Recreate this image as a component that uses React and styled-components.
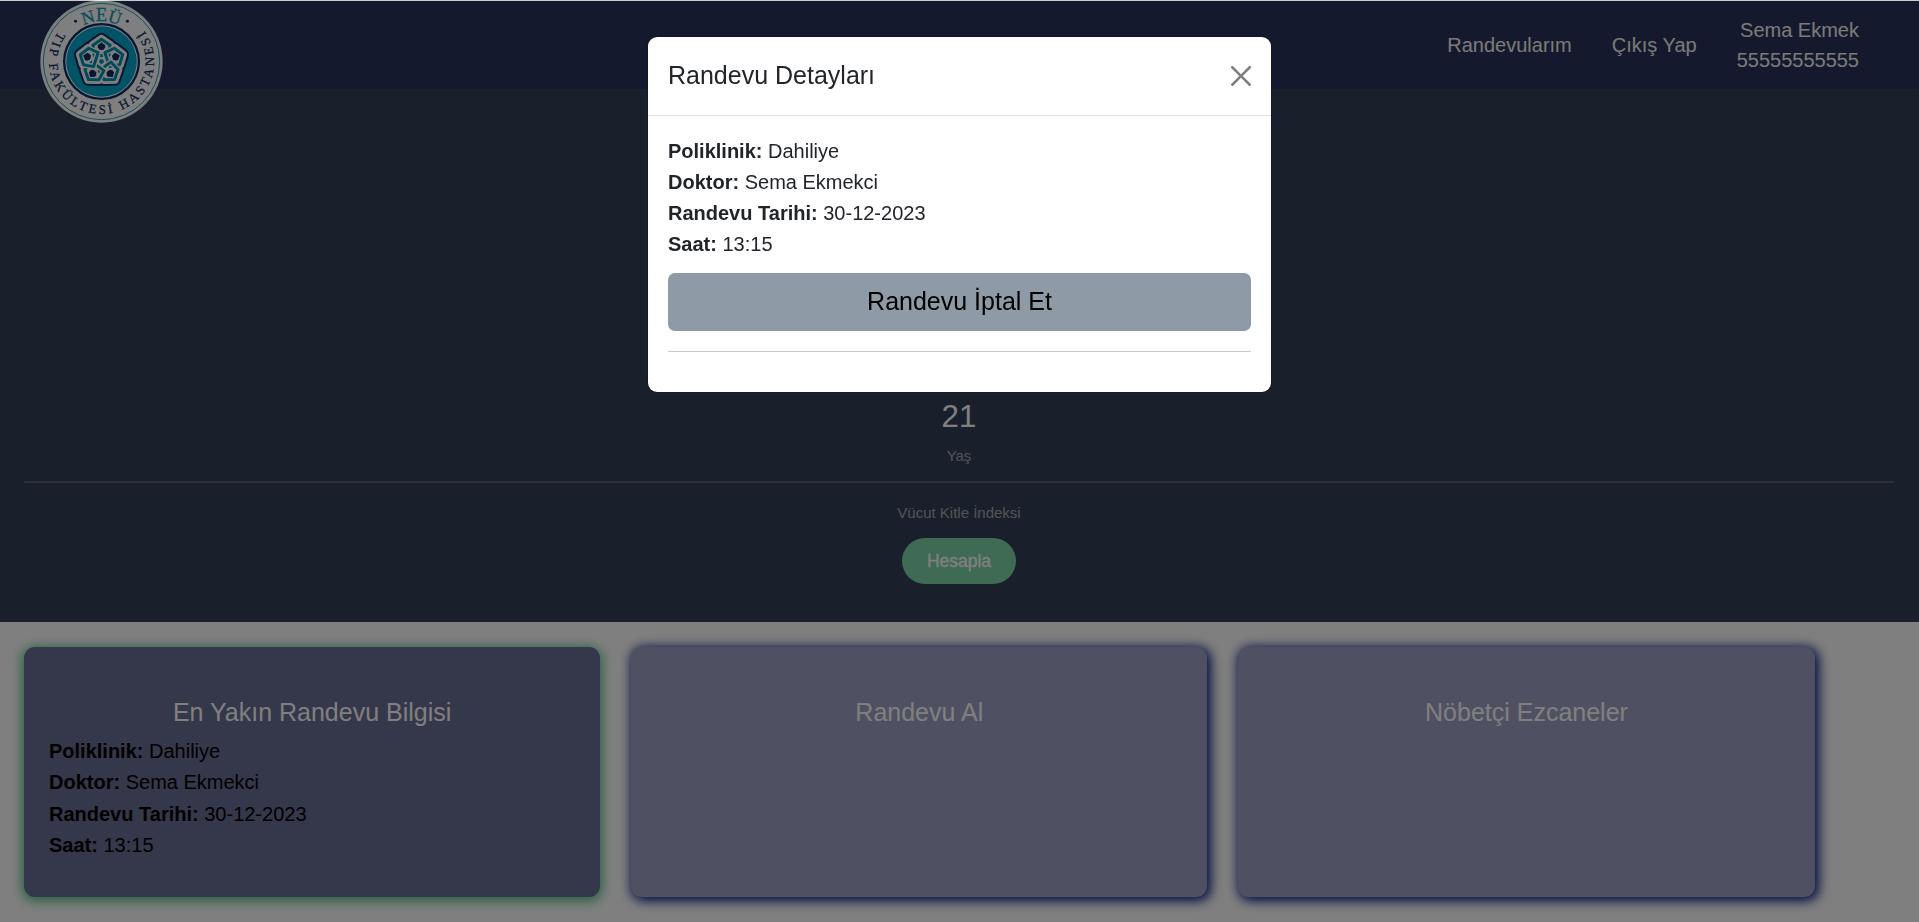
import React from "react";
import styled, { createGlobalStyle } from "styled-components";

const GlobalStyle = createGlobalStyle`
  *, *::before, *::after { box-sizing: border-box; }
  body {
    margin: 0;
    background: #fff;
    color: #000;
    font-family: Arial, "Liberation Sans", sans-serif;
    font-size: 20px;
    line-height: 1.5;
    overflow: hidden;
  }
`;

const Page = styled.div`
  display: flex;
  flex-direction: column;
  height: 100vh;
`;

const TopEdge = styled.div`
  flex: none;
  height: 1px;
  background: #c3cfcd;
`;

const Navbar = styled.nav`
  flex: none;
  display: flex;
  justify-content: space-between;
  height: 88px;
  padding: 0 60px 0 40px;
  background: #29325a;
`;

const LogoSvg = styled.svg`
  flex: none;
  width: 123px;
  height: 123px;
  margin-top: -1px;
  position: relative;
`;

const NavLinks = styled.div`
  display: flex;
  align-items: center;
  gap: 40px;
  color: #f6f5ee;
`;

const NavLink = styled.a`
  color: inherit;
  text-decoration: none;
`;

const UserInfo = styled.div`
  text-align: right;
`;

const Hero = styled.section`
  flex: none;
  display: flex;
  flex-direction: column;
  justify-content: flex-end;
  align-items: center;
  height: 533px;
  padding: 0 25px 38px 24px;
  background: #334059;
`;

const Age = styled.div`
  font-size: 31.25px;
  line-height: 38px;
  margin-bottom: 9px;
  color: #fff;
`;

const Caption = styled.div`
  font-size: 15px;
  line-height: 22px;
  color: #a5a7aa;
`;

const HeroRule = styled.hr`
  align-self: stretch;
  height: 2px;
  margin: 14px 0 19px;
  border: 0;
  background: #55616c;
`;

const CalcButton = styled.button`
  width: 114px;
  height: 46px;
  margin: 14px 0 0;
  padding: 0;
  border: 0;
  border-radius: 23px;
  background: #7ed6a8;
  color: #fff;
  font: 17.5px Arial, "Liberation Sans", sans-serif;
  -webkit-text-stroke: 0.3px #fff;
`;

const Cards = styled.section`
  flex: 1;
  display: flex;
  align-items: flex-start;
  gap: 31px;
  padding: 25px 0 0 24px;
`;

const Card = styled.article`
  flex: none;
  width: 576.2px;
  height: 250px;
  padding: 50px 25px 0;
  border-radius: 11px;
  background: ${(p) => (p.$active ? "#6a6e94" : "#9ea2c4")};
  box-shadow: ${(p) =>
    p.$active ? "0 2px 12px 2px #4fbf85" : "2px 2px 12px 2px #001a80"};
`;

const CardTitle = styled.h5`
  margin: 0 0 9px;
  font-size: 25px;
  line-height: 30px;
  font-weight: 400;
  text-align: center;
  color: #fff;
`;

const Details = styled.div`
  display: flex;
  flex-direction: column;
  line-height: ${(p) => p.$pitch};
`;

const Backdrop = styled.div`
  position: fixed;
  inset: 1px 0 0;
  display: flex;
  justify-content: center;
  align-items: flex-start;
  padding-top: 35px;
  background: rgba(0, 0, 0, 0.5);
`;

const Dialog = styled.div`
  width: 625px;
  border: 1px solid rgba(0, 0, 0, 0.18);
  border-radius: 10px;
  background: #fff;
  background-clip: padding-box;
  color: #212529;
`;

const DialogHeader = styled.header`
  display: flex;
  align-items: center;
  justify-content: space-between;
  height: 79px;
  padding: 0 20px;
  border-bottom: 1px solid #dee2e6;
`;

const DialogTitle = styled.h5`
  margin: 0;
  font-size: 25px;
  font-weight: 400;
`;

const CloseButton = styled.button`
  display: flex;
  padding: 0;
  border: 0;
  background: none;
  opacity: 0.5;
`;

const DialogBody = styled.div`
  padding: 20px;
`;

const CancelButton = styled.button`
  display: block;
  width: 100%;
  height: 58px;
  margin-top: 13px;
  padding: 0 0 1px;
  border: 0;
  border-radius: 7px;
  background: #8e9aa6;
  color: #000;
  font: 25px Arial, "Liberation Sans", sans-serif;
`;

const DialogRule = styled.hr`
  height: 1px;
  margin: 20px 0;
  border: 0;
  background: #c8c9ca;
`;

const appointment = [
  ["Poliklinik:", "Dahiliye"],
  ["Doktor:", "Sema Ekmekci"],
  ["Randevu Tarihi:", "30-12-2023"],
  ["Saat:", "13:15"],
];

function AppointmentDetails({ pitch }) {
  return (
    <Details $pitch={pitch}>
      {appointment.map(([label, value]) => (
        <div key={label}>
          <strong>{label}</strong> {value}
        </div>
      ))}
    </Details>
  );
}

const petals = [0, 72, 144, 216, 288];
const petalPath = "M0,-67 L26,-49 L22,-18 L-22,-18 L-26,-49 Z";

function Petal({ angle, color, width }) {
  return (
    <path
      d={petalPath}
      transform={`rotate(${angle})`}
      fill="none"
      stroke={color}
      strokeWidth={width}
      strokeLinejoin="round"
    />
  );
}

function Logo() {
  return (
    <LogoSvg viewBox="-185 -185 370 370">
      <defs>
        <path id="arc-top" d="M-121,0 A121,121 0 0 1 121,0" />
        <path id="arc-bottom" d="M-130,-90 A158,158 0 1 0 130,-90" />
      </defs>
      <circle r="184" fill="#fff" />
      <circle r="175" fill="none" stroke="#1fa3b8" strokeWidth="3" />
      <circle r="116" fill="#0e2f66" />
      <circle r="109" fill="#fff" />
      <circle r="106" fill="#00a9cd" />
      <circle cx="-78" cy="-121" r="4.5" fill="#0e2f66" />
      <circle cx="78" cy="-121" r="4.5" fill="#0e2f66" />
      <text
        fontFamily="'Liberation Serif', serif"
        fontSize="54"
        fill="#149dbd"
        stroke="#149dbd"
        strokeWidth="1"
        textAnchor="middle"
      >
        <textPath href="#arc-top" startOffset="50%">
          NEÜ
        </textPath>
      </text>
      <text
        fontFamily="'Liberation Serif', serif"
        fontSize="39"
        fill="#0e2f66"
        stroke="#0e2f66"
        strokeWidth="0.8"
      >
        <textPath href="#arc-bottom" textLength="690" lengthAdjust="spacing">
          TIP FAKÜLTESİ HASTANESİ
        </textPath>
      </text>
      {petals.map((a) => (
        <Petal key={a} angle={a} color="#0e2f66" width={38} />
      ))}
      {petals.map((a) => (
        <Petal key={a} angle={a} color="#fff" width={26} />
      ))}
      {petals.map((a) => (
        <g key={a}>
          <Petal angle={a} color="#fff" width={17} />
          <Petal angle={a} color="#0094b0" width={9} />
        </g>
      ))}
      {petals.map((a) => (
        <path
          key={a}
          d="M0,-58 L12,-48 L7,-35 L-7,-35 L-12,-48 Z"
          transform={`rotate(${a})`}
          fill="#0e2f66"
        />
      ))}
      <path d="M0,8 L7.5,2 L5,-6 L-5,-6 L-7.5,2 Z" fill="#0094b0" />
    </LogoSvg>
  );
}

export default function App() {
  return (
    <Page>
      <GlobalStyle />
      <TopEdge />
      <Navbar>
        <Logo />
        <NavLinks>
          <NavLink>Randevularım</NavLink>
          <NavLink>Çıkış Yap</NavLink>
          <UserInfo>
            <div>Sema Ekmek</div>
            <div>55555555555</div>
          </UserInfo>
        </NavLinks>
      </Navbar>
      <Hero>
        <Age>21</Age>
        <Caption>Yaş</Caption>
        <HeroRule />
        <Caption>Vücut Kitle İndeksi</Caption>
        <CalcButton>Hesapla</CalcButton>
      </Hero>
      <Cards>
        <Card $active>
          <CardTitle>En Yakın Randevu Bilgisi</CardTitle>
          <AppointmentDetails pitch="31.25px" />
        </Card>
        <Card>
          <CardTitle>Randevu Al</CardTitle>
        </Card>
        <Card>
          <CardTitle>Nöbetçi Ezcaneler</CardTitle>
        </Card>
      </Cards>
      <Backdrop>
        <Dialog role="dialog">
          <DialogHeader>
            <DialogTitle>Randevu Detayları</DialogTitle>
            <CloseButton aria-label="Kapat">
              <svg width="20" height="20" viewBox="0 0 16 16" fill="#000">
                <path d="M.293.293a1 1 0 0 1 1.414 0L8 6.586 14.293.293a1 1 0 1 1 1.414 1.414L9.414 8l6.293 6.293a1 1 0 0 1-1.414 1.414L8 9.414l-6.293 6.293a1 1 0 0 1-1.414-1.414L6.586 8 .293 1.707a1 1 0 0 1 0-1.414z" />
              </svg>
            </CloseButton>
          </DialogHeader>
          <DialogBody>
            <AppointmentDetails pitch="31px" />
            <CancelButton>Randevu İptal Et</CancelButton>
            <DialogRule />
          </DialogBody>
        </Dialog>
      </Backdrop>
    </Page>
  );
}
